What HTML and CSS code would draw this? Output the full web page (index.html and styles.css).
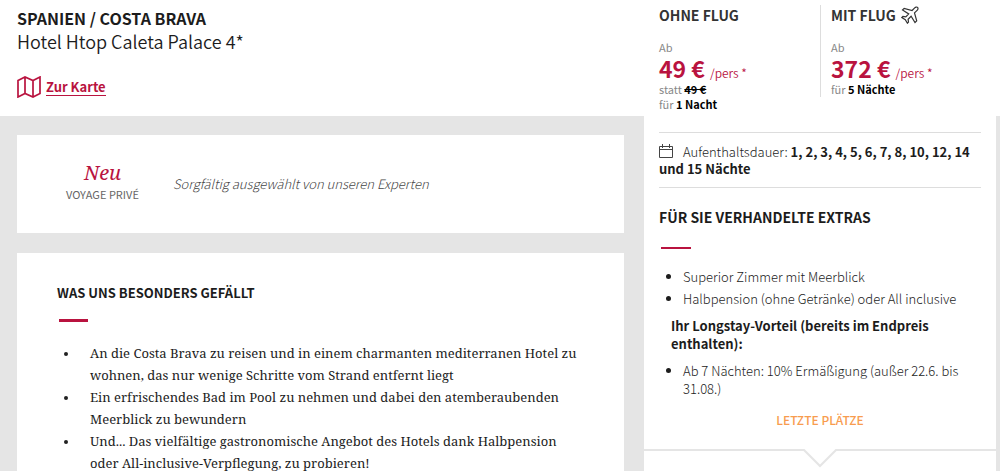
FILE: index.html
```html
<!DOCTYPE html>
<html lang="de">
<head>
<meta charset="utf-8">
<meta name="viewport" content="width=device-width, initial-scale=1">
<title>Hotel Htop Caleta Palace 4*</title>
<link rel="stylesheet" href="styles.css">
</head>
<body>
<div class="page">
  <header class="header">
    <h1 class="header-title"><strong class="header-place">SPANIEN / COSTA BRAVA</strong> <span class="header-hotel">Hotel Htop Caleta Palace 4*</span></h1>
    <a class="map-link" href="#karte">
      <svg class="map-icon" viewBox="0 0 24 22" aria-hidden="true"><path d="M1 4.500 8 1l8 3.500L23 1v16.500L16 21l-8-3.500L1 21zM8 1v16.500M16 4.500V21"/></svg>
      <span class="map-label">Zur Karte</span>
    </a>
  </header>

  <main class="content">
    <section class="card review">
      <div class="badge"><em class="badge-new">Neu</em><span class="badge-brand">VOYAGE PRIVÉ</span></div>
      <p class="review-text">Sorgfältig ausgewählt von unseren Experten</p>
    </section>
    <section class="card likes">
      <h2 class="likes-title">WAS UNS BESONDERS GEFÄLLT</h2>
      <ul class="likes-list">
        <li>An die Costa Brava zu reisen und in einem charmanten mediterranen Hotel zu wohnen, das nur wenige Schritte vom Strand entfernt liegt</li>
        <li>Ein erfrischendes Bad im Pool zu nehmen und dabei den atemberaubenden Meerblick zu bewundern</li>
        <li>Und... Das vielfältige gastronomische Angebot des Hotels dank Halbpension oder All-inclusive-Verpflegung, zu probieren!</li>
      </ul>
    </section>
  </main>

  <aside class="offer">
    <div class="offer-body">
      <div class="prices">
        <section class="price">
          <h2 class="price-title">OHNE FLUG</h2>
          <p class="price-note">Ab</p>
          <p class="price-amount"><strong>49 €</strong> <span>/pers *</span></p>
          <p class="price-note">statt <del>49 €</del></p>
          <p class="price-note">für <b>1 Nacht</b></p>
        </section>
        <section class="price price-flight">
          <h2 class="price-title">MIT FLUG
            <svg class="plane-icon" viewBox="0 0 18 18" aria-hidden="true"><path d="M16.600 1.400c-.7-.7-2-.4-2.900.5L11.100 4.500 3.200 2.300 1.500 4l6.200 3.900-2.900 3-2.900-.4-1.100 1.100 3.500 2.100 2.100 3.500 1.100-1.100-.4-2.900 3-2.900 3.900 6.200 1.700-1.700-2.200-7.900 2.600-2.600c.9-.9 1.200-2.200.5-2.900z"/></svg>
          </h2>
          <p class="price-note">Ab</p>
          <p class="price-amount"><strong>372 €</strong> <span>/pers *</span></p>
          <p class="price-note">für <b>5 Nächte</b></p>
        </section>
      </div>
      <p class="stay"><svg class="calendar-icon" viewBox="0 0 15 15" aria-hidden="true"><path d="M.5 2.500h13v11H.5zM.5 5.500h13M3.500 0v4M10.500 0v4"/></svg>Aufenthaltsdauer: <b>1, 2, 3, 4, 5, 6, 7, 8, 10, 12, 14 und 15 Nächte</b></p>
      <h2 class="extras-title">FÜR SIE VERHANDELTE EXTRAS</h2>
      <ul class="extras-list">
        <li>Superior Zimmer mit Meerblick</li>
        <li>Halbpension (ohne Getränke) oder All inclusive</li>
      </ul>
      <h3 class="longstay">Ihr Longstay-Vorteil (bereits im Endpreis enthalten):</h3>
      <ul class="extras-list">
        <li>Ab 7 Nächten: 10% Ermäßigung (außer 22.6. bis 31.08.)</li>
      </ul>
      <p class="last-places">LETZTE PLÄTZE</p>
    </div>
    <div class="divider">
      <span class="divider-line"></span>
      <svg class="divider-notch" viewBox="0 0 34 19" aria-hidden="true"><path d="M0 1h1l16 16L33 1h1"/></svg>
      <span class="divider-line"></span>
    </div>
  </aside>
</div>
</body>
</html>
```
FILE: styles.css
```css
* { box-sizing: border-box; }

body, h1, h2, h3, p, ul { margin: 0; padding: 0; }

body {
  background: #e5e5e5;
  color: #1c1c1c;
  font-family: "Noto Sans CJK SC", "Open Sans", sans-serif;
  font-size: 13px;
  line-height: 18px;
}

.page {
  display: grid;
  grid-template-columns: minmax(0, 1fr) 352px 4px;
  grid-template-rows: auto 1fr;
  min-height: 100vh;
}

/* Header */
.header {
  grid-column: 1 / -1;
  grid-row: 1;
  display: flex;
  flex-direction: column;
  align-items: flex-start;
  gap: 23px;
  padding: 7px 17px 18px;
  background: #fff;
}

.header-title {
  display: flex;
  flex-direction: column;
  font-weight: 350;
}

.header-place { font-size: 16px; line-height: 22px; font-weight: 700; }
.header-hotel { font-size: 18px; line-height: 24px; }

.map-link {
  display: flex;
  align-items: center;
  gap: 5px;
  color: #b9133f;
  font-weight: 700;
  line-height: 16px;
  text-decoration: none;
}

.map-label { border-bottom: 1px solid; }

svg { fill: none; stroke: currentColor; }

.map-icon { width: 24px; height: 22px; stroke-width: 1.7; }

/* Main column */
.content {
  grid-column: 1;
  grid-row: 2;
  display: flex;
  flex-direction: column;
  gap: 20px;
  padding: 19px 20px 0 17px;
}

.card { background: #fff; }

.review {
  display: flex;
  align-items: center;
  gap: 34px;
  padding: 24px 49px;
  min-height: 98px;
}

.badge {
  display: flex;
  flex-direction: column;
  align-items: center;
  padding-bottom: 4px;
  color: #666;
  font-size: 11px;
}

.badge-new {
  color: #b9133f;
  font: italic 20px/24px "Noto Serif", "Liberation Serif", serif;
}

.review-text { color: #444; font-style: italic; font-weight: 300; }

.likes { flex: 1; padding: 31px 40px 0; }

.likes-title { font-size: 13px; line-height: 18px; }

.likes-title::after, .extras-title::after {
  content: "";
  display: block;
  width: 29px;
  height: 3px;
  margin: 17px 2px 0;
  background: #b9133f;
}

.likes-list {
  margin-top: 20px;
  padding-left: 7px;
  list-style: none;
  font: 13px/22px "Noto Serif", "Liberation Serif", serif;
}

.likes-list li { display: grid; grid-template-columns: 26px 1fr; }

.likes-list li::before {
  content: "";
  width: 4px;
  height: 4px;
  margin-top: 10px;
  border-radius: 50%;
  background: #222;
}

/* Offer column */
.offer { grid-column: 2; grid-row: 1 / 3; background: #fff; }

.offer-body { padding: 5px 15px 0; }

.prices { display: grid; grid-template-columns: 1fr 1fr; align-items: start; }

.price-flight { padding-left: 10px; border-left: 1px solid #ddd; }

.price-title {
  display: flex;
  align-items: center;
  gap: 5px;
  margin-bottom: 15px;
  color: #333;
  font-size: 14px;
  line-height: 20px;
}

.plane-icon { width: 18px; height: 18px; stroke-width: 1.2; }

.price-note { color: #888; font-size: 11px; line-height: 15px; }
.price-note b, .price-note del { color: #000; font-weight: 700; }

.price-amount {
  display: flex;
  align-items: baseline;
  gap: 5px;
  color: #b9133f;
  font-size: 12px;
  font-weight: 350;
  line-height: 16px;
}
.price-amount strong { font-size: 23px; font-weight: 700; line-height: 27px; }

.stay {
  margin-top: 20px;
  padding: 10px 0;
  border: solid #ddd;
  border-width: 1px 0;
  font-weight: 300;
  line-height: 17px;
}

.stay b { font-weight: 700; }

.calendar-icon { width: 15px; height: 15px; margin-right: 9px; color: #444; vertical-align: -2px; }

.extras-title { margin-top: 18px; font-size: 14px; line-height: 22px; }
.extras-title::after { margin-top: 19px; height: 2px; width: 30px; }

.extras-list {
  display: grid;
  gap: 4px;
  padding-left: 24px;
  font-weight: 300;
}

.extras-title + .extras-list { margin-top: 19px; }

.longstay {
  margin: 9px 12px;
  font-size: 13px;
}

.last-places {
  margin-top: 13px;
  color: #f89c4f;
  font-size: 12px;
  font-weight: 500;
  text-align: center;
}

.divider { display: flex; margin-top: 20px; }
.divider-line { flex: 1; height: 2px; background: #e5e5e5; }
.divider-notch { width: 34px; height: 19px; stroke: #e5e5e5; stroke-width: 2; }
```
